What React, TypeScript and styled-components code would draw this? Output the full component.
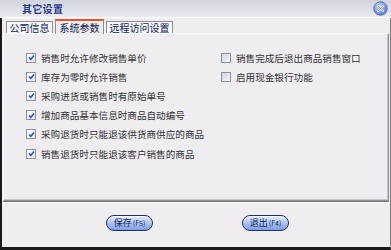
import React from 'react'
import styled, { createGlobalStyle } from 'styled-components'

const Global = createGlobalStyle`
  html, body {
    margin: 0;
    padding: 0;
    background: #efedf0;
  }
  body {
    font-family: "Liberation Sans", "Noto Sans CJK SC", sans-serif;
  }
`

const Window = styled.div`
  width: 391px;
  height: 250px;
  box-sizing: border-box;
  display: flex;
  flex-direction: column;
  background: #efedf0;
  overflow: hidden;
`

const TitleBar = styled.div`
  height: 17px;
  flex: none;
  display: flex;
  align-items: center;
  justify-content: space-between;
  padding: 0 3px 0 22px;
  background: linear-gradient(#d2d3de, #e9eaf0);
  border-bottom: 1px solid #ffffff;
`

const Title = styled.div`
  font-family: "Noto Sans CJK SC", sans-serif;
  font-size: 10px;
  line-height: 12px;
  font-weight: 700;
  color: #1f3a8e;
  letter-spacing: 0.3px;
`

const Frame = styled.div`
  flex: 1;
  display: flex;
  flex-direction: column;
  border-left: 2px solid #1a1a1a;
  border-right: 1px solid #7c7c80;
  border-bottom: 3px solid #1a1a1a;
  padding: 1px 1px 0 1px;
`

const TabStrip = styled.div`
  height: 14px;
  flex: none;
  display: flex;
  align-items: flex-end;
  gap: 2px;
  padding-left: 3px;
`

const Tab = styled.div<{ $active?: boolean, $width: number }>`
  box-sizing: border-box;
  width: ${ p => p.$width }px;
  height: ${ p => p.$active ? 15 : 12 }px;
  display: flex;
  align-items: center;
  justify-content: center;
  font-family: "Noto Sans CJK SC", sans-serif;
  font-size: 10px;
  line-height: 10px;
  color: #0e2459;
  background: ${ p => p.$active ? '#efedf0' : '#f7f6f8' };
  border: 1px solid #8d8c92;
  border-bottom: none;
  border-top: ${ p => p.$active ? '2px solid #f0512c' : '1px solid #8d8c92' };
  margin-bottom: ${ p => p.$active ? -1 : 0 }px;
  position: relative;
  z-index: ${ p => p.$active ? 1 : 0 };
`

const TabPage = styled.div`
  height: 168px;
  flex: none;
  box-sizing: border-box;
  border: 1px solid #8d8c92;
  border-left-color: #ffffff;
  border-top-color: #ffffff;
  box-shadow: inset -1px -1px 0 #c8c6cc;
  display: grid;
  grid-template-columns: 195px 1fr;
  align-content: start;
  padding: 14px 0 0 22px;
`

const Column = styled.div`
  display: flex;
  flex-direction: column;
`

const Option = styled.label`
  height: 19.2px;
  display: flex;
  align-items: center;
  gap: 5px;
  font-family: "Noto Sans CJK SC", sans-serif;
  font-size: 9.6px;
  line-height: 10px;
  color: #333336;
  white-space: nowrap;
`

const Box = styled.span<{ $checked?: boolean }>`
  width: 10px;
  height: 10px;
  flex: none;
  box-sizing: border-box;
  border: 1px solid #8a93a4;
  background: ${ p => p.$checked
    ? 'linear-gradient(135deg, #ffffff, #e4e6ee)'
    : 'linear-gradient(135deg, #d0d0d8, #f6f6f8)' };
  display: flex;
  align-items: center;
  justify-content: center;
`

const ButtonBar = styled.div`
  flex: 1;
  display: flex;
  align-items: center;
  padding: 0 0 4px 103px;
  gap: 89px;
  border-top: 1px solid #76757a;
  box-shadow: inset 0 1px 0 #ffffff;
`

const PillButton = styled.button`
  width: 47px;
  height: 16px;
  padding: 0;
  border: 1px solid #1e2f6e;
  border-radius: 8px;
  background: linear-gradient(#e6eeff, #a9c1f3 55%, #7f9fe2);
  box-shadow: inset 0 1px 0 #ffffff;
  font-family: "Noto Sans CJK SC", sans-serif;
  font-size: 9px;
  line-height: 10px;
  color: #0f1f5c;
  display: flex;
  align-items: center;
  justify-content: center;
  cursor: pointer;
`

const Key = styled.span`
  font-size: 7px;
  margin-left: 1px;
`

const Check = () => (
  <svg width="7" height="7" viewBox="0 0 7 7">
    <path d="M1 3.5 L2.8 5.3 L6 1.5" fill="none" stroke="#2a4fb0" strokeWidth="1.5" />
  </svg>
)

const CloseIcon = () => (
  <svg width="15" height="15" viewBox="0 0 15 15">
    <defs>
      <radialGradient id="cg" cx="40%" cy="35%" r="65%">
        <stop offset="0%" stopColor="#c9d8f6" />
        <stop offset="100%" stopColor="#5a7fd0" />
      </radialGradient>
    </defs>
    <circle cx="7.5" cy="7.5" r="6.8" fill="url(#cg)" stroke="#4a64a8" strokeWidth="0.8" />
    <path d="M4.8 4.8 L10.2 10.2 M10.2 4.8 L4.8 10.2" stroke="#ffffff" strokeWidth="1.8" strokeLinecap="round" />
    <path d="M4.8 4.8 L10.2 10.2 M10.2 4.8 L4.8 10.2" stroke="#3a5aa8" strokeWidth="0.6" strokeLinecap="round" />
  </svg>
)

const leftOptions = [
  '销售时允许修改销售单价',
  '库存为零时允许销售',
  '采购进货或销售时有原始单号',
  '增加商品基本信息时商品自动编号',
  '采购退货时只能退该供货商供应的商品',
  '销售退货时只能退该客户销售的商品',
]

const rightOptions = [
  '销售完成后退出商品销售窗口',
  '启用现金银行功能',
]

const tabs = [
  { label: '公司信息', width: 47 },
  { label: '系统参数', width: 49, active: true },
  { label: '远程访问设置', width: 67 },
]

const App = () => {
  const optionRender = (list: string[], checked: boolean) => list.map(text => (
    <Option key={ text }>
      <Box $checked={ checked }>{ checked && <Check /> }</Box>
      { text }
    </Option>
  ))

  return (
    <Window>
      <Global />
      <TitleBar>
        <Title>其它设置</Title>
        <CloseIcon />
      </TitleBar>
      <Frame>
        <TabStrip>
          { tabs.map(t => (
            <Tab key={ t.label } $active={ t.active } $width={ t.width }>{ t.label }</Tab>
          )) }
        </TabStrip>
        <TabPage>
          <Column>{ optionRender(leftOptions, true) }</Column>
          <Column>{ optionRender(rightOptions, false) }</Column>
        </TabPage>
        <ButtonBar>
          <PillButton>保存<Key>(F5)</Key></PillButton>
          <PillButton>退出<Key>(F4)</Key></PillButton>
        </ButtonBar>
      </Frame>
    </Window>
  )
}

export default App
